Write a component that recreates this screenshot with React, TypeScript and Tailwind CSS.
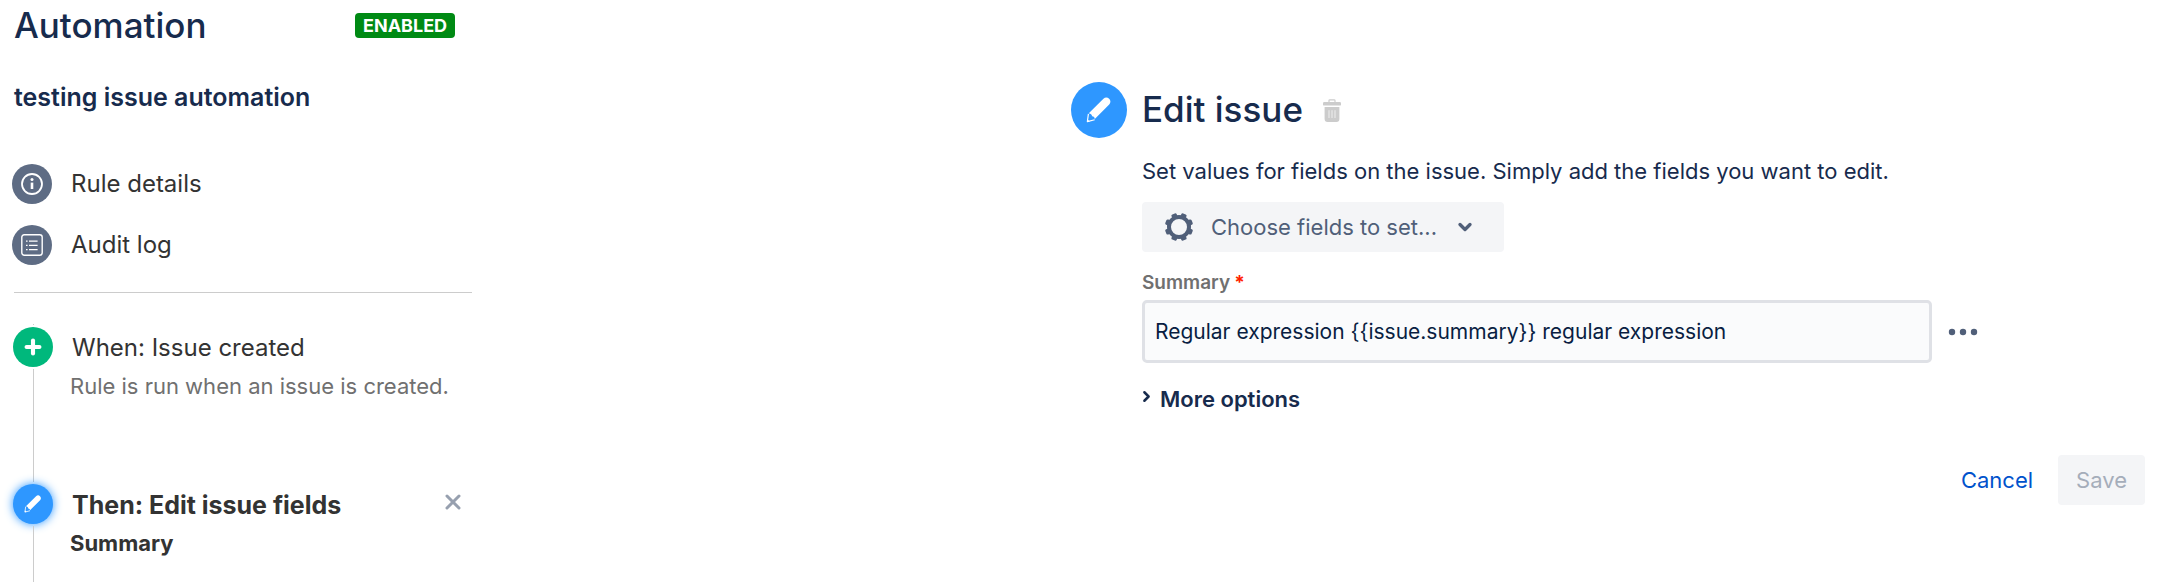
import type { ReactNode } from "react";
import { Plus, X, ChevronDown, ChevronRight } from "lucide-react";

function PencilIcon({ className }: { className?: string }) {
    return (
        <svg viewBox="0 0 26 27" className={className} fill="currentColor" aria-hidden="true">
            <path d="M2.4 16.8 17.6 1.8c2-1.8 4.2-1.6 5.9.1s1.9 3.9.1 5.8L8.6 22.8c-.2-1.6-1-2.5-2.7-2.7-.3-1.9-1.5-2.9-3.5-3.3Z" />
            <path d="M2 17.5.9 25.6l7.6-2" fill="none" stroke="currentColor" strokeWidth="1.2" strokeLinejoin="round" />
            <path d="m.6 26 .4-3 2.4 2.4Z" />
        </svg>
    );
}

function InfoIcon() {
    return (
        <svg viewBox="0 0 22 22" className="size-[22px]" fill="none" stroke="currentColor" aria-hidden="true">
            <circle cx="11" cy="11" r="10" strokeWidth="1.8" />
            <path d="M11 9.6v6.4" strokeWidth="2.6" />
            <circle cx="11" cy="6.6" r="1.5" fill="currentColor" stroke="none" />
        </svg>
    );
}

function LogIcon() {
    return (
        <svg viewBox="0 0 22 22" className="size-[22px]" fill="none" stroke="currentColor" aria-hidden="true">
            <rect x=".8" y=".8" width="20.4" height="20.4" rx="2.4" strokeWidth="1.4" />
            <path d="M8 7.2h8.6M8 11.4h8.6M8 15.6h8.6M5 7.2h1.6M5 11.4h1.6M5 15.6h1.6" strokeWidth="1.3" />
        </svg>
    );
}

const cogTeeth = [22.5, 67.5, 112.5, 157.5, 202.5, 247.5, 292.5, 337.5];

function CogIcon() {
    return (
        <svg viewBox="0 0 28 28" className="size-7" fill="currentColor" aria-hidden="true">
            <circle cx="14" cy="14" r="10" fill="none" stroke="currentColor" strokeWidth="4" />
            {cogTeeth.map((angle) => (
                <rect key={angle} x="11.2" y="-.2" width="5.6" height="4.4" rx="1.5" transform={`rotate(${angle} 14 14)`} />
            ))}
        </svg>
    );
}

function TrashIcon() {
    return (
        <svg viewBox="0 0 18 23" className="h-[23px] w-[18px]" aria-hidden="true">
            <path d="M6 3.4V1.6Q6 .8 6.8.8h4.4q.8 0 .8.8v1.8" fill="none" stroke="#ccc" strokeWidth="1.2" />
            <rect y="3" width="18" height="3.6" rx="1.2" fill="#ccc" />
            <path d="M1.6 8h14.8v12q0 3-3 3H4.6q-3 0-3-3Z" fill="#ccc" />
            <path d="M6 11.2V19M9 11.2V19M12 11.2V19" stroke="#eee" strokeWidth="1" />
        </svg>
    );
}

interface NavItem {
    label: string;
    href: string;
    icon: ReactNode;
}

const navItems: NavItem[] = [
    { label: "Rule details", href: "#details", icon: <InfoIcon /> },
    { label: "Audit log", href: "#audit-log", icon: <LogIcon /> },
];

function Sidebar() {
    return (
        <aside className="flex w-[472px] shrink-0 flex-col pl-3">
            <header className="flex items-center pt-[3px] text-[#172b4d]">
                <h1 className="w-[343px] pl-[2px] text-[35px] leading-[44px] font-medium">Automation</h1>
                <span className="rounded-[4px] bg-[#008a14] px-2 text-[18px] leading-[25px] font-bold text-white">ENABLED</span>
            </header>
            <h2 className="mt-8 pl-[2px] text-[25px] leading-9 font-semibold text-[#172b4d]">testing issue automation</h2>
            <nav className="mt-[49px] flex flex-col gap-[21px]">
                {navItems.map((item) => (
                    <a key={item.label} href={item.href} className="flex h-10 items-center gap-[19px] text-[24px] text-[#333]">
                        <span className="flex size-10 items-center justify-center rounded-full bg-[#5e6c84] text-white">{item.icon}</span>
                        {item.label}
                    </a>
                ))}
            </nav>
            <hr className="mt-[27px] ml-[2px] border-[#ccc]" />
            <ol className="flex grow flex-col pt-[31px] text-[#333]">
                <li className="flex h-[157px] gap-4">
                    <div className="flex w-[42px] flex-col items-center gap-[2px]">
                        <span className="h-px w-px bg-[#ccc]" />
                        <span className="flex size-10 shrink-0 items-center justify-center rounded-full bg-[#00b87c] text-white">
                            <Plus className="size-[22px]" strokeWidth={4.5} />
                        </span>
                        <span className="w-px grow bg-[#ccc]" />
                    </div>
                    <div>
                        <p className="pt-1 pl-[2px] text-[24px] leading-10">When: Issue created</p>
                        <p className="text-[22px] leading-9 text-[#707070]">Rule is run when an issue is created.</p>
                    </div>
                </li>
                <li className="flex grow gap-4">
                    <div className="flex w-[42px] flex-col items-center gap-[2px]">
                        <span className="h-px w-px bg-[#ccc]" />
                        <span className="flex size-10 shrink-0 items-center justify-center rounded-full bg-[#2e97ff] text-white shadow-[0_0_10px_#2e97ff]">
                            <PencilIcon className="size-[18px]" />
                        </span>
                        <span className="w-px grow bg-[#ccc]" />
                    </div>
                    <div className="grow font-bold">
                        <div className="flex items-start justify-between pt-1 pr-[7px] pl-[2px]">
                            <p className="text-[25px] leading-10">Then: Edit issue fields</p>
                            <button type="button" aria-label="Remove step" className="mt-[5px] text-[#97a0af]">
                                <X className="size-6" strokeWidth={3} />
                            </button>
                        </div>
                        <p className="text-[22px] leading-9">Summary</p>
                    </div>
                </li>
            </ol>
        </aside>
    );
}

function EditIssueForm() {
    return (
        <main className="max-w-[1087px] flex-1 pt-[82px] pr-[13px] text-[22px] text-[#172b4d]">
            <header className="flex items-center">
                <span className="flex size-14 items-center justify-center rounded-full bg-[#2e97ff] text-white">
                    <PencilIcon className="size-[26px]" />
                </span>
                <h2 className="ml-[15px] pb-[2px] text-[35px] leading-[44px] font-medium">Edit issue</h2>
                <button type="button" aria-label="Delete action" className="ml-5">
                    <TrashIcon />
                </button>
            </header>
            <form className="pl-[71px]" onSubmit={(e) => e.preventDefault()}>
                <p className="mt-[15px] leading-9">Set values for fields on the issue. Simply add the fields you want to edit.</p>
                <button type="button" className="mt-[13px] flex h-[50px] w-[362px] items-center rounded-[4px] bg-[#f4f5f7] pl-[23px] text-[#505f79]">
                    <CogIcon />
                    <span className="ml-[18px]">Choose fields to set...</span>
                    <ChevronDown className="ml-[18px] size-5" strokeWidth={4} />
                </button>
                <label htmlFor="summary" className="mt-[17px] flex gap-1 text-[19px] leading-7 font-semibold text-[#707070]">
                    Summary <span className="font-bold text-[#ff1f00]">*</span>
                </label>
                <div className="mt-[3px] flex items-center gap-[14px]">
                    <input
                        id="summary"
                        type="text"
                        required
                        defaultValue="Regular expression {{issue.summary}} regular expression"
                        className="h-[63px] w-[790px] rounded-[5px] border-3 border-[#dfe1e6] bg-[#fafbfc] px-[10px] text-[21px] text-[#091e42]"
                    />
                    <button type="button" aria-label="More actions" className="text-[#505f79]">
                        <svg viewBox="0 0 34 8" className="h-2 w-[34px]" fill="currentColor" aria-hidden="true">
                            <circle cx="6" cy="4" r="3.2" />
                            <circle cx="17" cy="4" r="3.2" />
                            <circle cx="28" cy="4" r="3.2" />
                        </svg>
                    </button>
                </div>
                <button type="button" className="mt-[18px] flex items-center leading-9 font-semibold">
                    <ChevronRight className="mr-[5px] mb-[6px] -ml-1 size-[17px]" strokeWidth={3.5} />
                    More options
                </button>
                <div className="mt-[38px] flex justify-end gap-2">
                    <button type="button" className="h-[50px] px-[17px] text-[#0052cc]">Cancel</button>
                    <button type="submit" disabled className="h-[50px] rounded-[4px] bg-[#f4f5f7] px-[18px] text-[#a5adba]">Save</button>
                </div>
            </form>
        </main>
    );
}

export default function App() {
    return (
        <div className="flex min-h-screen justify-between bg-white font-['Inter',sans-serif]">
            <Sidebar />
            <EditIssueForm />
        </div>
    );
}
